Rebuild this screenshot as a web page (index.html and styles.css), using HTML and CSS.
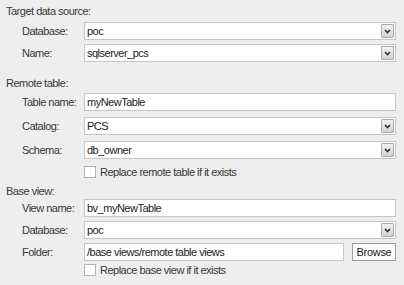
FILE: index.html
```html
<!DOCTYPE html>
<html lang="en">
<head>
    <meta charset="UTF-8">
    <meta name="viewport" content="width=device-width, initial-scale=1.0">
    <title>Create Remote Table</title>
    <link rel="stylesheet" href="styles.css">
</head>
<body>
    <div class="panel">
        <div class="title">Target data source:</div>
        <div class="row gap-4">
            <span class="label">Database:</span>
            <div class="field combo"><span class="value">poc</span><span class="drop"><svg width="7" height="5" viewBox="0 0 7 5"><path d="M1 1 L3.5 3.5 L6 1" fill="none" stroke="#33373e" stroke-width="1.7"/></svg></span></div>
        </div>
        <div class="row gap-4">
            <span class="label">Name:</span>
            <div class="field combo"><span class="value">sqlserver_pcs</span><span class="drop"><svg width="7" height="5" viewBox="0 0 7 5"><path d="M1 1 L3.5 3.5 L6 1" fill="none" stroke="#33373e" stroke-width="1.7"/></svg></span></div>
        </div>

        <div class="title title-gap">Remote table:</div>
        <div class="row gap-3">
            <span class="label">Table name:</span>
            <div class="field"><span class="value">myNewTable</span></div>
        </div>
        <div class="row gap-6">
            <span class="label">Catalog:</span>
            <div class="field combo"><span class="value">PCS</span><span class="drop"><svg width="7" height="5" viewBox="0 0 7 5"><path d="M1 1 L3.5 3.5 L6 1" fill="none" stroke="#33373e" stroke-width="1.7"/></svg></span></div>
        </div>
        <div class="row gap-6">
            <span class="label">Schema:</span>
            <div class="field combo"><span class="value">db_owner</span><span class="drop"><svg width="7" height="5" viewBox="0 0 7 5"><path d="M1 1 L3.5 3.5 L6 1" fill="none" stroke="#33373e" stroke-width="1.7"/></svg></span></div>
        </div>
        <label class="check gap-6">
            <input type="checkbox">
            <span>Replace remote table if it exists</span>
        </label>

        <div class="title title-gap-sm">Base view:</div>
        <div class="row gap-1">
            <span class="label">View name:</span>
            <div class="field"><span class="value">bv_myNewTable</span></div>
        </div>
        <div class="row gap-4">
            <span class="label">Database:</span>
            <div class="field combo"><span class="value">poc</span><span class="drop"><svg width="7" height="5" viewBox="0 0 7 5"><path d="M1 1 L3.5 3.5 L6 1" fill="none" stroke="#33373e" stroke-width="1.7"/></svg></span></div>
        </div>
        <div class="row gap-4">
            <span class="label">Folder:</span>
            <div class="field"><span class="value">/base views/remote table views</span></div>
            <button class="browse">Browse</button>
        </div>
        <label class="check gap-2">
            <input type="checkbox">
            <span>Replace base view if it exists</span>
        </label>
    </div>
</body>
</html>
```

FILE: styles.css
```css
body {
    margin: 0;
    background-color: #eeeeee;
    font-family: "Liberation Sans", Arial, sans-serif;
    font-size: 11px;
    letter-spacing: -0.5px;
    color: #383838;
}

.panel {
    padding: 5px 8px 0 6px;
}

.title {
    line-height: 13px;
}

.title-gap {
    margin-top: 15px;
}

.title-gap-sm {
    margin-top: 6px;
}

.row {
    display: flex;
    align-items: center;
    height: 18px;
    padding-left: 16px;
}

.gap-1 { margin-top: 1px; }
.gap-2 { margin-top: 2px; }
.gap-3 { margin-top: 3px; }
.gap-4 { margin-top: 4px; }
.gap-6 { margin-top: 6px; }

.label {
    width: 62px;
    flex-shrink: 0;
}

.field {
    flex: 1;
    display: flex;
    align-items: center;
    height: 18px;
    box-sizing: border-box;
    background: #fff;
    border: 1px solid #c6c6c6;
    padding-left: 2px;
    color: #1c1c1c;
}

.value {
    flex: 1;
    line-height: 16px;
    white-space: nowrap;
}

.drop {
    display: flex;
    align-items: center;
    justify-content: center;
    width: 13px;
    height: 14px;
    box-sizing: border-box;
    margin-right: 1px;
    border: 1px solid #a9acb2;
    border-radius: 1px;
    background: linear-gradient(#f2f2f3, #d2d4d8);
}

.browse {
    margin-left: 8px;
    height: 18px;
    width: 44px;
    padding: 0;
    font-family: inherit;
    font-size: 11px;
    letter-spacing: -0.3px;
    color: #1c1c1c;
    background: #fbfbfb;
    border: 1px solid #9d9d9d;
}

.check {
    display: flex;
    align-items: center;
    height: 14px;
    padding-left: 78px;
}

.check input {
    appearance: none;
    margin: 0 4px 0 0;
    width: 12px;
    height: 12px;
    background: #fff;
    border: 1px solid #b4b4b4;
}
```
